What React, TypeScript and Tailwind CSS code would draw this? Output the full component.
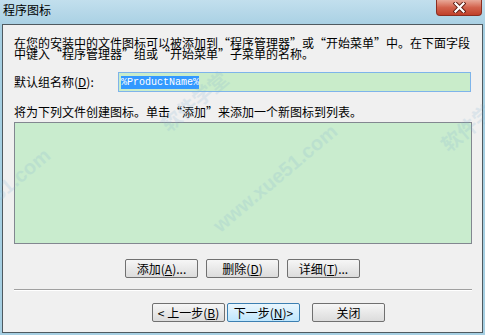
const cjk = "font-['Noto_Sans_CJK_SC','Noto_Sans',sans-serif]";

function Mn({ k }: { k: string }) {
  return (
    <span>
      (<span className="underline underline-offset-1">{k}</span>)
    </span>
  );
}

function Btn({ children, focus = false, w }: { children: React.ReactNode; focus?: boolean; w: string }) {
  return (
    <div
      className={`${w} flex h-[19px] items-center justify-center rounded-[2px] border text-[12px] leading-none text-black ${
        focus
          ? 'border-[#3c7fb1] bg-gradient-to-b from-[#eaf6fd] to-[#bee6fd]'
          : 'border-[#707070] bg-gradient-to-b from-[#f6f6f6] to-[#dcdcdc]'
      }`}
    >
      {children}
    </div>
  );
}

// faint diagonal site watermark laid over the dialog
function Watermark({ text, className }: { text: string; className: string }) {
  return (
    <div
      className={`pointer-events-none absolute w-[200px] -rotate-[40deg] whitespace-nowrap text-center font-['Liberation_Sans','Noto_Sans_CJK_SC',sans-serif] text-[20px] font-bold leading-[24px] text-[#7fb0d0] opacity-[0.18] ${className}`}
    >
      {text}
    </div>
  );
}

export default function App() {
  return (
    <div className={`relative flex h-[335px] w-[485px] flex-col overflow-hidden bg-[#a6cfe2] ${cjk}`}>
      {/* title bar */}
      <div className="flex h-[24px] items-start justify-between bg-gradient-to-b from-[#c2dfed] to-[#aad1e4] pl-[3px]">
        <span className="pt-[2px] text-[12px] leading-[16px] text-black">程序图标</span>
        <div className="mr-[3px] flex h-[16px] w-[46px] items-center justify-center rounded-b-[4px] border border-t-0 border-[#8b2e20] bg-gradient-to-b from-[#e8a898] via-[#d2624c] to-[#c0402a]">
          <svg width="13" height="11" viewBox="0 0 13 11">
            <path d="M2.5 1.5 L10.5 9.5 M10.5 1.5 L2.5 9.5" stroke="#5a1a10" strokeWidth="4" strokeLinecap="square" />
            <path d="M2.5 1.5 L10.5 9.5 M10.5 1.5 L2.5 9.5" stroke="#ffffff" strokeWidth="2.2" strokeLinecap="square" />
          </svg>
        </div>
      </div>

      {/* client area */}
      <div className="mx-[2px] mb-[2px] flex flex-1 flex-col border border-[#4f5a60] bg-[#f0f0f0] pl-[11px] pr-[10px] text-[12px] text-black">
        <p className="pt-[12px] leading-[11px]">
          在您的安装中的文件图标可以被添加到“程序管理器”或“开始菜单”中。在下面字段
          <br />
          中键入“程序管理器”组或“开始菜单”子菜单的名称。
        </p>

        <div className="mt-[13px] flex h-[20px] items-center">
          <span className="w-[104px] leading-none">
            默认组名称<Mn k="D" />:
          </span>
          <div className="flex h-[20px] w-[353px] items-center border border-[#7eb4ea] bg-[#c9ecca] pl-[2px]">
            <span className="bg-[#3399ff] font-['Liberation_Mono',monospace] text-[10px] leading-[13px] text-white">
              %ProductName%
            </span>
          </div>
        </div>

        <p className="mt-[13px] leading-[14px]">将为下列文件创建图标。单击“添加”来添加一个新图标到列表。</p>

        <div className="mt-[3px] h-[122px] border border-[#828790] bg-[#c9ecce]" />

        <div className="mt-[15px] flex pl-[111px]">
          <Btn w="w-[73px]">
            添加<Mn k="A" />...
          </Btn>
          <div className="w-[8px]" />
          <Btn w="w-[73px]">
            删除<Mn k="D" />
          </Btn>
          <div className="w-[8px]" />
          <Btn w="w-[73px]">
            详细<Mn k="T" />...
          </Btn>
        </div>

        <div className="mt-[11px] border-t border-b border-t-[#a0a0a0] border-b-white" />

        <div className="mt-[12px] flex pl-[138px]">
          <Btn w="w-[73px]">
            &lt; 上一步<Mn k="B" />
          </Btn>
          <div className="w-[2px]" />
          <Btn w="w-[73px]" focus>
            下一步<Mn k="N" /> &gt;
          </Btn>
          <div className="w-[12px]" />
          <Btn w="w-[73px]">关闭</Btn>
        </div>
      </div>

      <Watermark text="www.xue51.com" className="left-[175px] top-[166px]" />
      <Watermark text="www.xue51.com" className="left-[-112px] top-[190px]" />
      <Watermark text="软件学堂" className="left-[95px] top-[90px]" />
      <Watermark text="软件学堂" className="left-[375px] top-[110px]" />
    </div>
  );
}
